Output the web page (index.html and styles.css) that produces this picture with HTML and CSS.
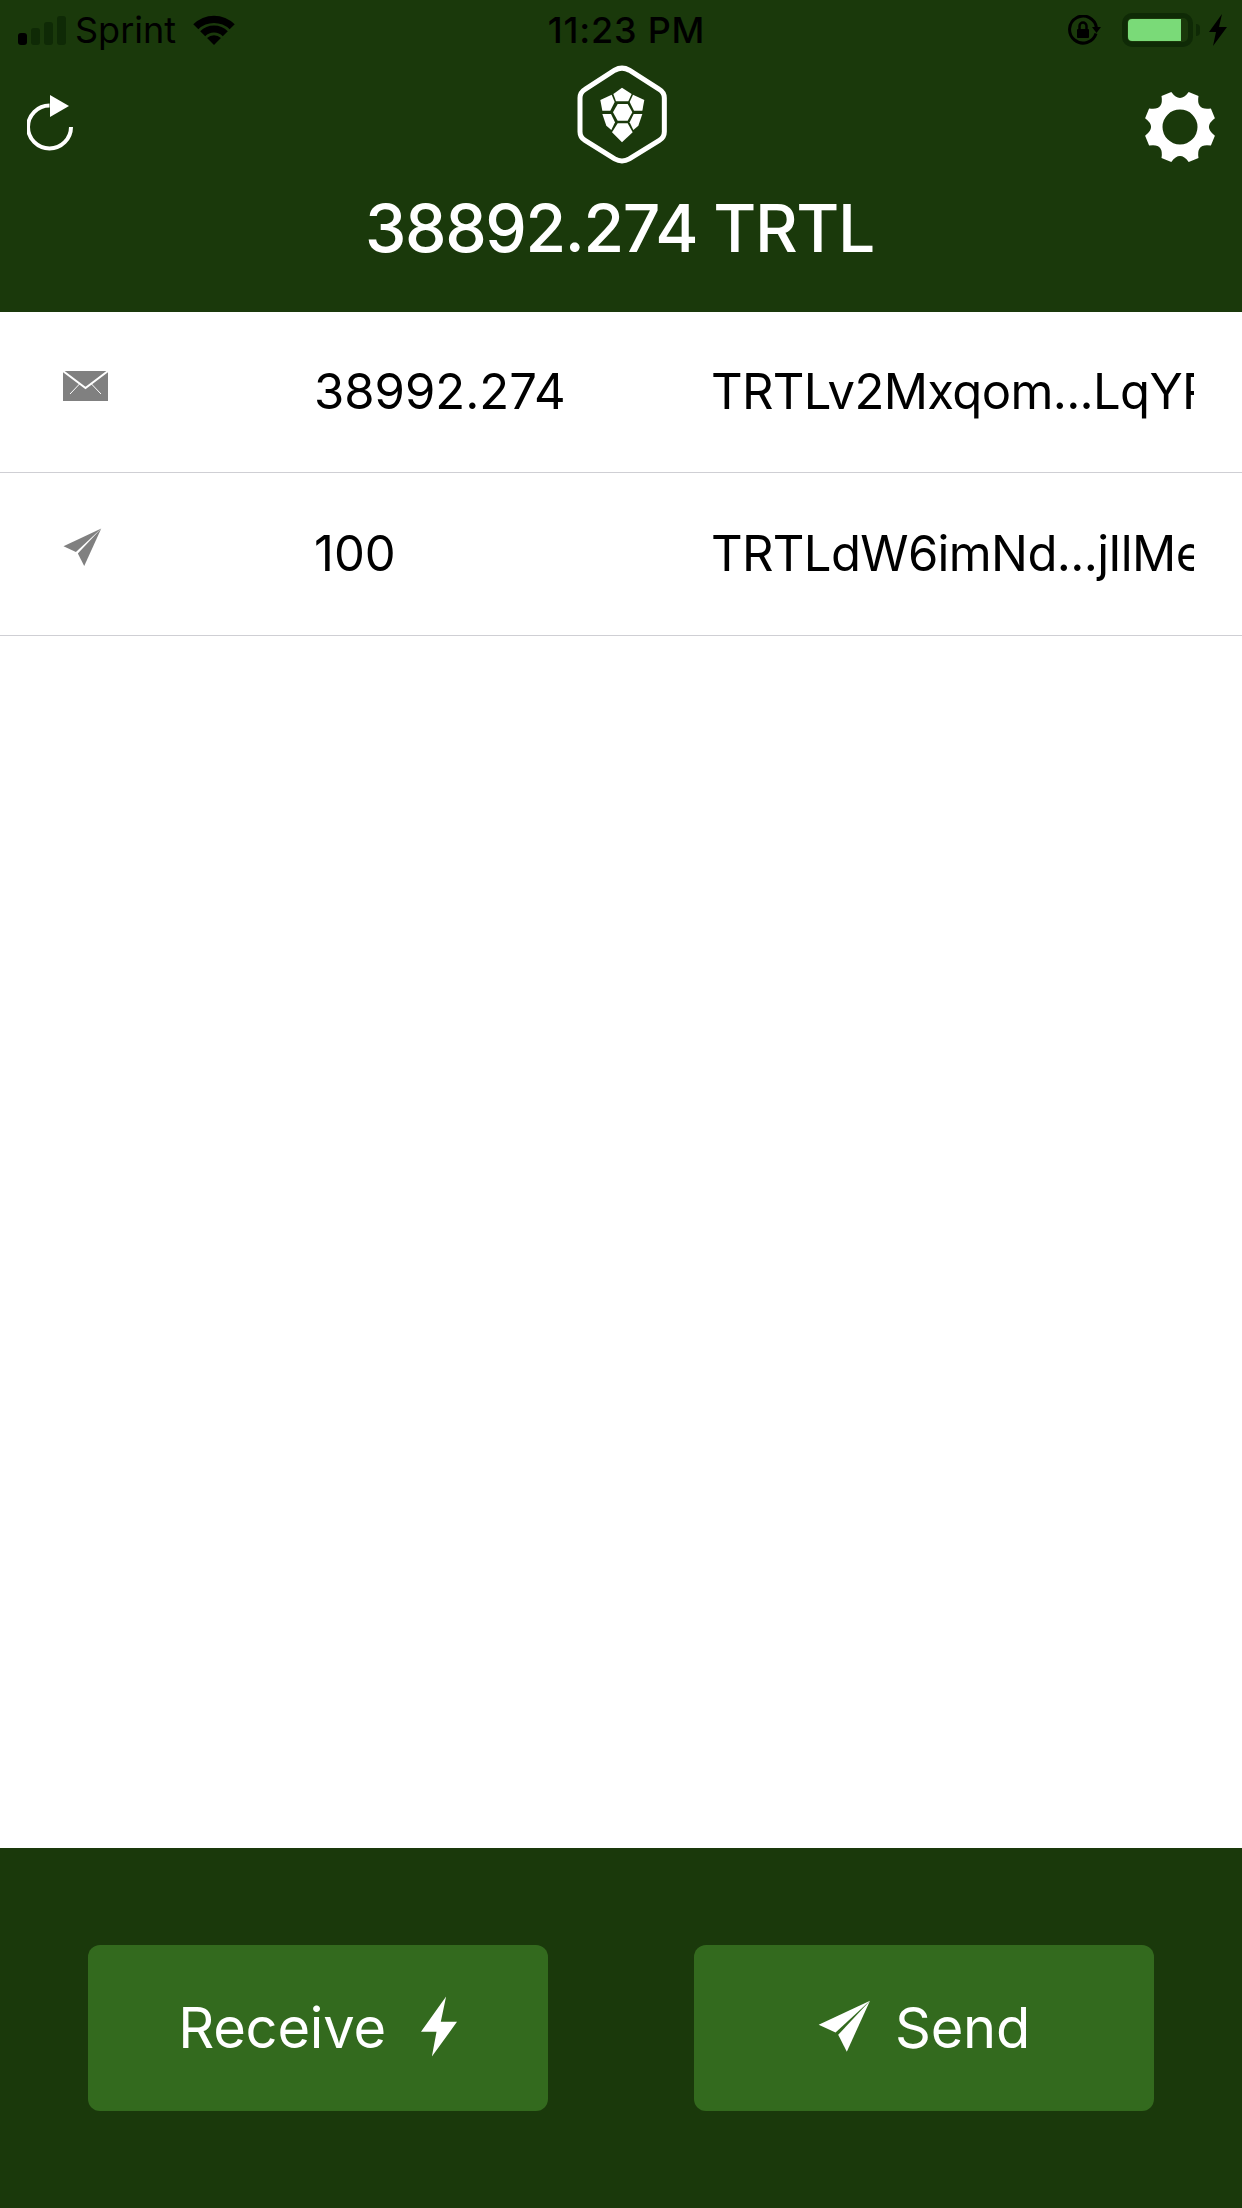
FILE: index.html
```html
<!DOCTYPE html>
<html lang="en">
<head>
    <meta charset="UTF-8">
    <meta name="viewport" content="width=device-width, initial-scale=1.0">
    <title>TurtleCoin Wallet</title>
    <link rel="stylesheet" href="styles.css">
</head>
<body>
    <div class="app">
        <header class="top">
            <div class="status-bar">
                <div class="status-left">
                    <div class="signal">
                        <span class="bar bar-1"></span>
                        <span class="bar bar-2"></span>
                        <span class="bar bar-3"></span>
                        <span class="bar bar-4"></span>
                    </div>
                    <span class="carrier">Sprint</span>
                    <svg class="wifi" viewBox="0 0 128 92">
                        <path d="M0.400 28.400A90 90 0 0 1 127.600 28.400L112 44A68 68 0 0 0 16 44Z"/>
                        <path d="M21.600 49.600A60 60 0 0 1 106.400 49.600L90.900 65.100A38 38 0 0 0 37.100 65.100Z"/>
                        <path d="M42.800 70.800A30 30 0 0 1 85.200 70.800L64 92Z"/>
                    </svg>
                </div>
                <div class="clock">11:23 PM</div>
                <div class="status-right">
                    <svg class="rotation" viewBox="0 0 34 30">
                        <path class="rotation-ring" d="M28 18.500A13.500 13.500 0 1 1 28.500 13"/>
                        <path d="M24 12H33L28.500 18Z"/>
                        <rect x="9" y="14" width="12" height="9" rx="1"/>
                        <path class="rotation-ring thin" d="M11.500 14V11A3.500 3.500 0 0 1 18.500 11V14"/>
                    </svg>
                    <div class="battery">
                        <div class="battery-shell"><div class="battery-fill"></div></div>
                        <span class="battery-tip"></span>
                    </div>
                    <svg class="charge" viewBox="0 0 18 32">
                        <path d="M13 0L0 18H7L4 32L18 13H10Z"/>
                    </svg>
                </div>
            </div>
            <div class="nav">
                <svg class="refresh" viewBox="0 0 48 56">
                    <path class="refresh-arc" d="M44 32A21.500 21.500 0 1 1 22.500 10.500"/>
                    <path class="refresh-head" d="M23 0L42 11L23 22Z"/>
                </svg>
                <svg class="logo" viewBox="165 200 276 300">
                    <path class="logo-hex" d="M281 218.700Q303 206 325 218.700L415 276Q430 285 430 302L430 403Q430 420 415 429L325 484.800Q303 497.500 281 484.800L192 429Q177 420 177 403L177 302Q177 285 192 276Z"/>
                    <polygon points="277,290 303,271 332,290 322,312 285,312"/>
                    <polygon points="290,320 320,320 334,345 320,370 290,370 276,345"/>
                    <polygon points="238,308 272,292 281,314 268,340 244,340"/>
                    <polygon points="370,308 336,292 326,314 339,340 364,340"/>
                    <polygon points="244,350 270,350 282,375 271,398 256,385"/>
                    <polygon points="364,350 338,350 326,375 337,398 352,385"/>
                    <polygon points="290,378 320,378 335,405 303,435 273,405"/>
                </svg>
                <svg class="gear" viewBox="-37 -37 74 74">
                    <path fill-rule="evenodd" d="M34.900 8.700L30.900 18.500Q16 16 18.500 30.900L8.700 34.900Q0 23 -8.700 34.900L-18.500 30.900Q-16 16 -30.900 18.500L-34.900 8.700Q-23 0 -34.900 -8.700L-30.900 -18.500Q-16 -16 -18.500 -30.900L-8.700 -34.900Q0 -23 8.700 -34.900L18.500 -30.900Q16 -16 30.900 -18.500L34.900 -8.700Q23 0 34.900 8.700ZM17.500 0A17.500 17.500 0 1 0 -17.500 0A17.500 17.500 0 1 0 17.500 0Z"/>
                </svg>
            </div>
            <h1 class="balance">38892.274 TRTL</h1>
        </header>

        <main class="tx-list">
            <div class="tx-row">
                <svg class="tx-icon mail" viewBox="0 0 45 30">
                    <rect width="45" height="30"/>
                    <path class="mail-flap" d="M0 0L22.500 17L45 0"/>
                    <path class="mail-fold" d="M7 23L16.500 13M38 23L28.500 13"/>
                </svg>
                <div class="tx-amount">38992.274</div>
                <div class="tx-address">TRTLv2Mxqom...LqYRfh</div>
            </div>
            <div class="tx-row">
                <svg class="tx-icon plane" viewBox="80 60 160 160">
                    <polygon points="237,62 82,135 133,158"/>
                    <polygon points="237,62 141,165 167,216"/>
                </svg>
                <div class="tx-amount">100</div>
                <div class="tx-address">TRTLdW6imNd...jIlMeQ7a</div>
            </div>
        </main>

        <footer class="actions">
            <div class="btn">
                <span>Receive</span>
                <svg class="bolt" viewBox="115 15 115 188">
                    <polygon points="194,18 118,125 165,125 151,200 227,95 178,95"/>
                </svg>
            </div>
            <div class="btn btn-send">
                <svg class="send" viewBox="80 60 160 160">
                    <polygon points="237,62 82,135 133,158"/>
                    <polygon points="237,62 141,165 167,216"/>
                </svg>
                <span>Send</span>
            </div>
        </footer>
    </div>
</body>
</html>
```

FILE: styles.css
```css
:root {
    --dark-green: #1a390b;
    --btn-green: #336a1e;
    --rule: #cfcfd4;
    --icon-grey: #808080;
}

body {
    margin: 0;
    background: #fff;
    color: #000;
    font-family: Inter, "Noto Sans", sans-serif;
}

.app {
    display: flex;
    flex-direction: column;
    height: 2208px;
    overflow: hidden;
}

.top {
    background: var(--dark-green);
    height: 312px;
}

/* status bar */
.status-bar {
    display: grid;
    grid-template-columns: 1fr auto 1fr;
    align-items: center;
    height: 60px;
    padding: 0 15px 0 18px;
}

.status-left,
.status-right {
    display: flex;
    align-items: center;
}

.status-right {
    justify-content: flex-end;
}

.signal {
    display: flex;
    align-items: flex-end;
    gap: 4px;
    height: 30px;
}

.bar {
    width: 9px;
    border-radius: 3px;
    background: #0f2a06;
}

.bar-1 { height: 12px; background: #000; }
.bar-2 { height: 17px; }
.bar-3 { height: 23px; }
.bar-4 { height: 29px; }

.carrier {
    margin-left: 9px;
    font-size: 36px;
    line-height: 40px;
}

.wifi {
    width: 42px;
    height: 30px;
    margin-left: 17px;
    fill: #000;
}

.clock {
    margin-left: 8px;
    font-size: 36px;
    font-weight: 500;
    letter-spacing: 0.800px;
    line-height: 40px;
}

.rotation {
    width: 34px;
    height: 30px;
    fill: #000;
}

.rotation-ring {
    fill: none;
    stroke: #000;
    stroke-width: 3;
}

.rotation-ring.thin {
    stroke-width: 2.500;
}

.battery {
    display: flex;
    align-items: center;
    gap: 3px;
    margin-left: 20px;
}

.battery-shell {
    box-sizing: border-box;
    width: 71px;
    height: 34px;
    padding: 1px;
    border: 5px solid #0f2a06;
    border-radius: 10px;
}

.battery-fill {
    width: 53px;
    height: 22px;
    background: #7ada78;
    border-radius: 4px 0 0 4px;
}

.battery-tip {
    width: 4px;
    height: 12px;
    background: #0f2a06;
    border-radius: 0 4px 4px 0;
}

.charge {
    width: 18px;
    height: 32px;
    margin-left: 9px;
    fill: #000;
}

/* nav row */
.nav {
    display: grid;
    grid-template-columns: 1fr auto 1fr;
    align-items: center;
    height: 108px;
    padding: 0 25px 0 27px;
}

.refresh {
    width: 48px;
    height: 56px;
    margin-top: 18px;
}

.refresh-arc {
    fill: none;
    stroke: #fff;
    stroke-width: 4;
}

.refresh-head {
    fill: #fff;
}

.logo {
    width: 92px;
    height: 100px;
    fill: #fff;
}

.logo-hex {
    fill: none;
    stroke: #fff;
    stroke-width: 15;
}

.gear {
    width: 74px;
    height: 74px;
    margin-top: 26px;
    justify-self: end;
    fill: #fff;
}

.balance {
    margin: 20px 0 0;
    padding-right: 3px;
    color: #fff;
    font-size: 66px;
    font-weight: 500;
    letter-spacing: -1.400px;
    line-height: 80px;
    text-align: center;
}

/* transactions */
.tx-list {
    flex: 1;
}

.tx-row {
    display: grid;
    grid-template-columns: 314px 397px 483px;
    align-items: center;
    height: 163px;
    box-sizing: border-box;
    padding-bottom: 1px;
    border-bottom: 1.500px solid var(--rule);
}

.tx-row:first-child {
    height: 161px;
}

.tx-amount,
.tx-address {
    font-size: 49px;
    line-height: 60px;
    white-space: nowrap;
    overflow: hidden;
}

.tx-address {
    letter-spacing: -0.650px;
}

.tx-icon {
    display: block;
    margin: -12px 0 0 63px;
    fill: var(--icon-grey);
}

.mail {
    width: 45px;
    height: 30px;
}

.mail-flap,
.mail-fold {
    fill: none;
    stroke: #fff;
}

.mail-flap {
    stroke-width: 2;
}

.mail-fold {
    stroke-width: 1;
}

.plane {
    width: 39px;
    height: 39px;
}

/* bottom buttons */
.actions {
    display: grid;
    grid-template-columns: 460px 460px;
    justify-content: space-between;
    height: 360px;
    box-sizing: border-box;
    padding: 97px 88px;
    background: var(--dark-green);
}

.btn {
    display: flex;
    justify-content: center;
    align-items: center;
    gap: 34px;
    background: var(--btn-green);
    border-radius: 12px;
    color: #fff;
    font-size: 56px;
    letter-spacing: -0.200px;
}

.btn-send {
    gap: 24px;
}

.bolt {
    width: 38px;
    height: 63px;
    margin-bottom: 4px;
    fill: #fff;
}

.send {
    width: 53px;
    height: 53px;
    margin-bottom: 4px;
    fill: #fff;
}
```
